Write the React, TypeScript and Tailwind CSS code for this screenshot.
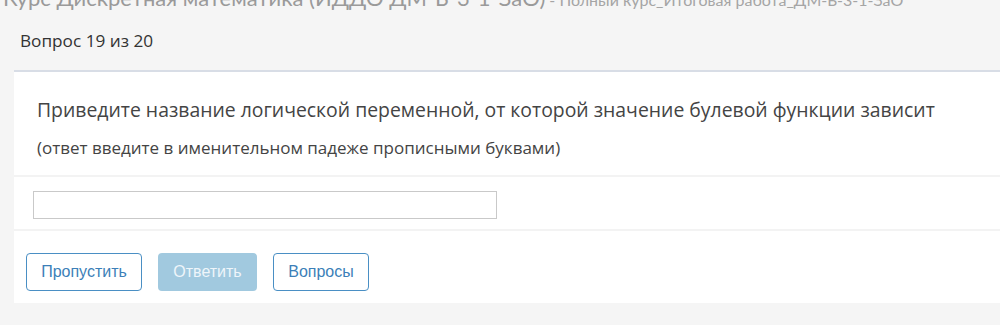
import React from "react";

const App: React.FC = () => {
  return (
    <div className="h-[325px] overflow-hidden bg-[#f5f5f5] font-['Open_Sans',sans-serif]">
      <header className="-mt-[15px] h-[26px] pl-[3px] whitespace-nowrap leading-[26px] font-['Lato',sans-serif]">
        <span className="text-[22px] text-[#9a9a9a]">Курс Дискретная математика (ИДДО ДМ-Б-3-1-ЗаО)</span>
        <span className="text-[16px] text-[#a5a5a5]"> - Полный курс_Итоговая работа_ДМ-Б-3-1-ЗаО</span>
      </header>

      <div className="pl-5 pt-[20px] text-[17.2px] leading-[20px] text-[#333]">Вопрос 19 из 20</div>

      <div className="ml-[14px] -mr-[20px] mt-[19px] border-t-2 border-[#d8dde6] bg-white">
        <div className="px-[23px] pt-[25px] pb-[16px] border-b-2 border-[#f3f3f3]">
          <p className="whitespace-nowrap text-[19.4px] leading-[26px] text-[#444]">
            Приведите название логической переменной, от которой значение булевой функции зависит
          </p>
          <p className="mt-[14px] text-[17px] leading-[22px] text-[#444]">
            (ответ введите в именительном падеже прописными буквами)
          </p>
        </div>

        <div className="px-[19px] pt-[14px] pb-[10px] border-b-2 border-[#f3f3f3]">
          <input
            type="text"
            className="block h-[28px] w-[464px] border-[1.5px] border-[#c9c9c9] bg-white outline-none"
          />
        </div>

        <div className="flex gap-4 px-[12px] pt-[22px] pb-[12px] font-['Liberation_Sans',Arial,sans-serif] text-[16px]">
          <button className="h-[38px] w-[116px] rounded-[4px] border border-[#4a8fc4] bg-white text-[#3c7fb8]">
            Пропустить
          </button>
          <button className="h-[38px] w-[99px] rounded-[4px] bg-[#a1c9df] text-[#eef5fa]">
            Ответить
          </button>
          <button className="h-[38px] w-[96px] rounded-[4px] border border-[#4a8fc4] bg-white text-[#3c7fb8]">
            Вопросы
          </button>
        </div>
      </div>
    </div>
  );
};

export default App;
